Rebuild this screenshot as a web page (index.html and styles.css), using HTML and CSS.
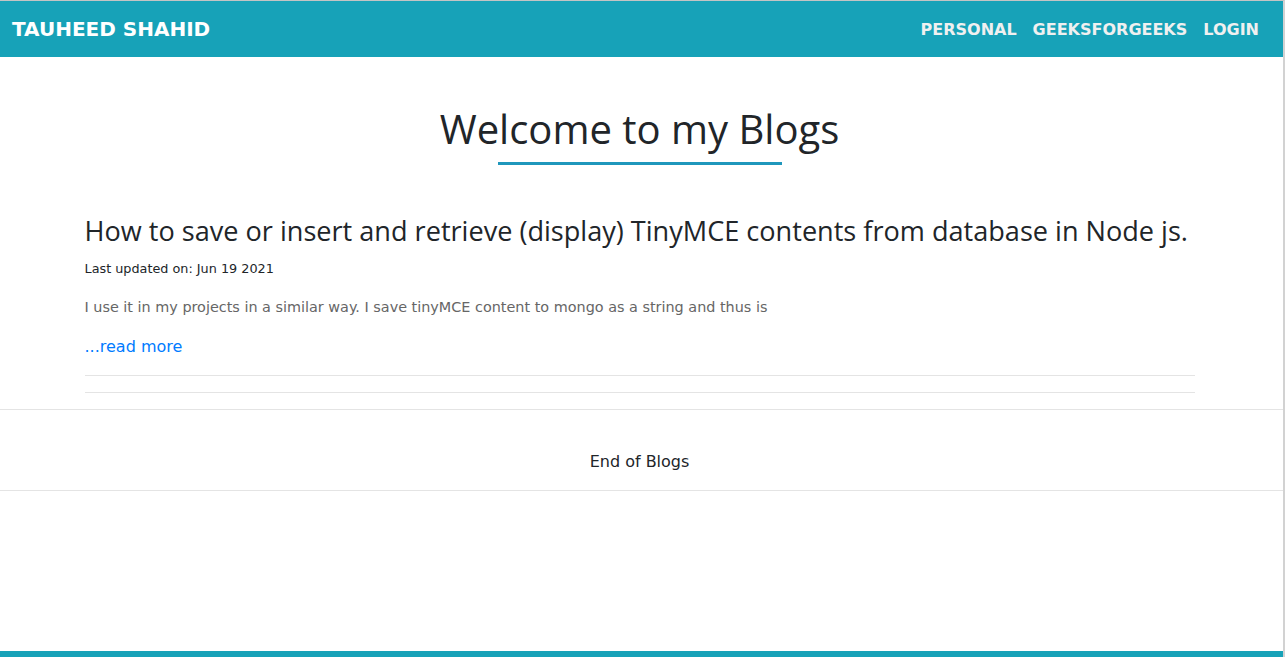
FILE: index.html
```html
<!DOCTYPE html>
<html lang="en">
<head>
<meta charset="utf-8">
<title>Tauheed Shahid - Blogs</title>
<link rel="stylesheet" href="styles.css">
</head>
<body>
  <nav class="navbar">
    <a class="brand" href="#">TAUHEED SHAHID</a>
    <ul class="nav-links">
      <li><a href="#">PERSONAL</a></li>
      <li><a href="#">GEEKSFORGEEKS</a></li>
      <li><a href="#">LOGIN</a></li>
    </ul>
  </nav>
  <main class="main">
    <header class="page-head">
      <h1 class="page-title">Welcome to my Blogs</h1>
      <div class="title-rule"></div>
    </header>
    <section class="container">
      <article class="post">
        <h2 class="post-title">How to save or insert and retrieve (display) TinyMCE contents from database in Node js.</h2>
        <p class="post-date">Last updated on: Jun 19 2021</p>
        <p class="post-excerpt">I use it in my projects in a similar way. I save tinyMCE content to mongo as a string and thus is</p>
        <a class="read-more" href="#">...read more</a>
      </article>
      <hr class="rule rule-first">
      <hr class="rule">
    </section>
    <hr class="rule full">
    <p class="end-text">End of Blogs</p>
    <hr class="rule full">
  </main>
  <footer class="footer"></footer>
</body>
</html>
```
FILE: styles.css
```css
* { box-sizing: border-box; }
html, body { height: 100%; }
body {
  margin: 0;
  font-family: "DejaVu Sans", Verdana, sans-serif;
  color: #212529;
  background: #fff;
  border-top: 1px solid #c4c4c4;
  border-right: 2px solid #d2d2d2;
  display: flex;
  flex-direction: column;
  overflow: hidden;
}
.navbar {
  height: 56px;
  background: #17a2b8;
  display: flex;
  align-items: center;
  justify-content: space-between;
  padding: 0 16px 0 12px;
  flex: none;
}
.brand {
  color: #fff;
  font-weight: bold;
  font-size: 20px;
  text-decoration: none;
}
.nav-links {
  list-style: none;
  margin: 0;
  padding: 0;
  display: flex;
}
.nav-links a {
  display: block;
  padding: 0 8px;
  color: #f0f0f0;
  font-weight: bold;
  font-size: 16px;
  text-decoration: none;
}
.main { flex: 1; }
.page-head {
  display: flex;
  flex-direction: column;
  align-items: center;
  padding-top: 45px;
  padding-right: 4px;
}
.page-title {
  margin: 0;
  font-family: "Open Sans", "Noto Sans", sans-serif;
  font-weight: 400;
  font-size: 40px;
  line-height: 54px;
  color: #212529;
}
.title-rule {
  width: 284px;
  height: 3px;
  margin-top: 6px;
  background: #1f97bc;
}
.container {
  width: 1110px;
  margin: 0 auto;
  transform: translateX(-2px);
}
.post { padding-top: 49px; }
.post-title {
  margin: 0;
  font-family: "Open Sans", "Noto Sans", sans-serif;
  font-weight: 400;
  font-size: 27.1px;
  line-height: 34px;
  color: #212529;
  white-space: nowrap;
}
.post-date {
  margin: 12px 0 0;
  font-size: 12.8px;
  line-height: 18px;
  color: #212529;
}
.post-excerpt {
  margin: 18px 0 0;
  font-size: 14.4px;
  line-height: 22px;
  color: #666;
}
.read-more {
  display: block;
  margin-top: 17px;
  font-size: 16px;
  line-height: 24px;
  color: #007bff;
  text-decoration: none;
}
.rule {
  margin: 16px 0 0;
  border: 0;
  border-top: 1px solid #e4e4e4;
  height: 0;
}
.rule-first { margin-top: 16px; }
.full { margin-top: 16px; }
.end-text {
  margin: 40px 0 16px;
  padding-right: 4px;
  text-align: center;
  font-size: 16px;
  line-height: 24px;
  color: #212529;
}
.end-text + .full { margin-top: 0; }
.footer {
  flex: none;
  height: 6px;
  background: #17a2b8;
}
```
